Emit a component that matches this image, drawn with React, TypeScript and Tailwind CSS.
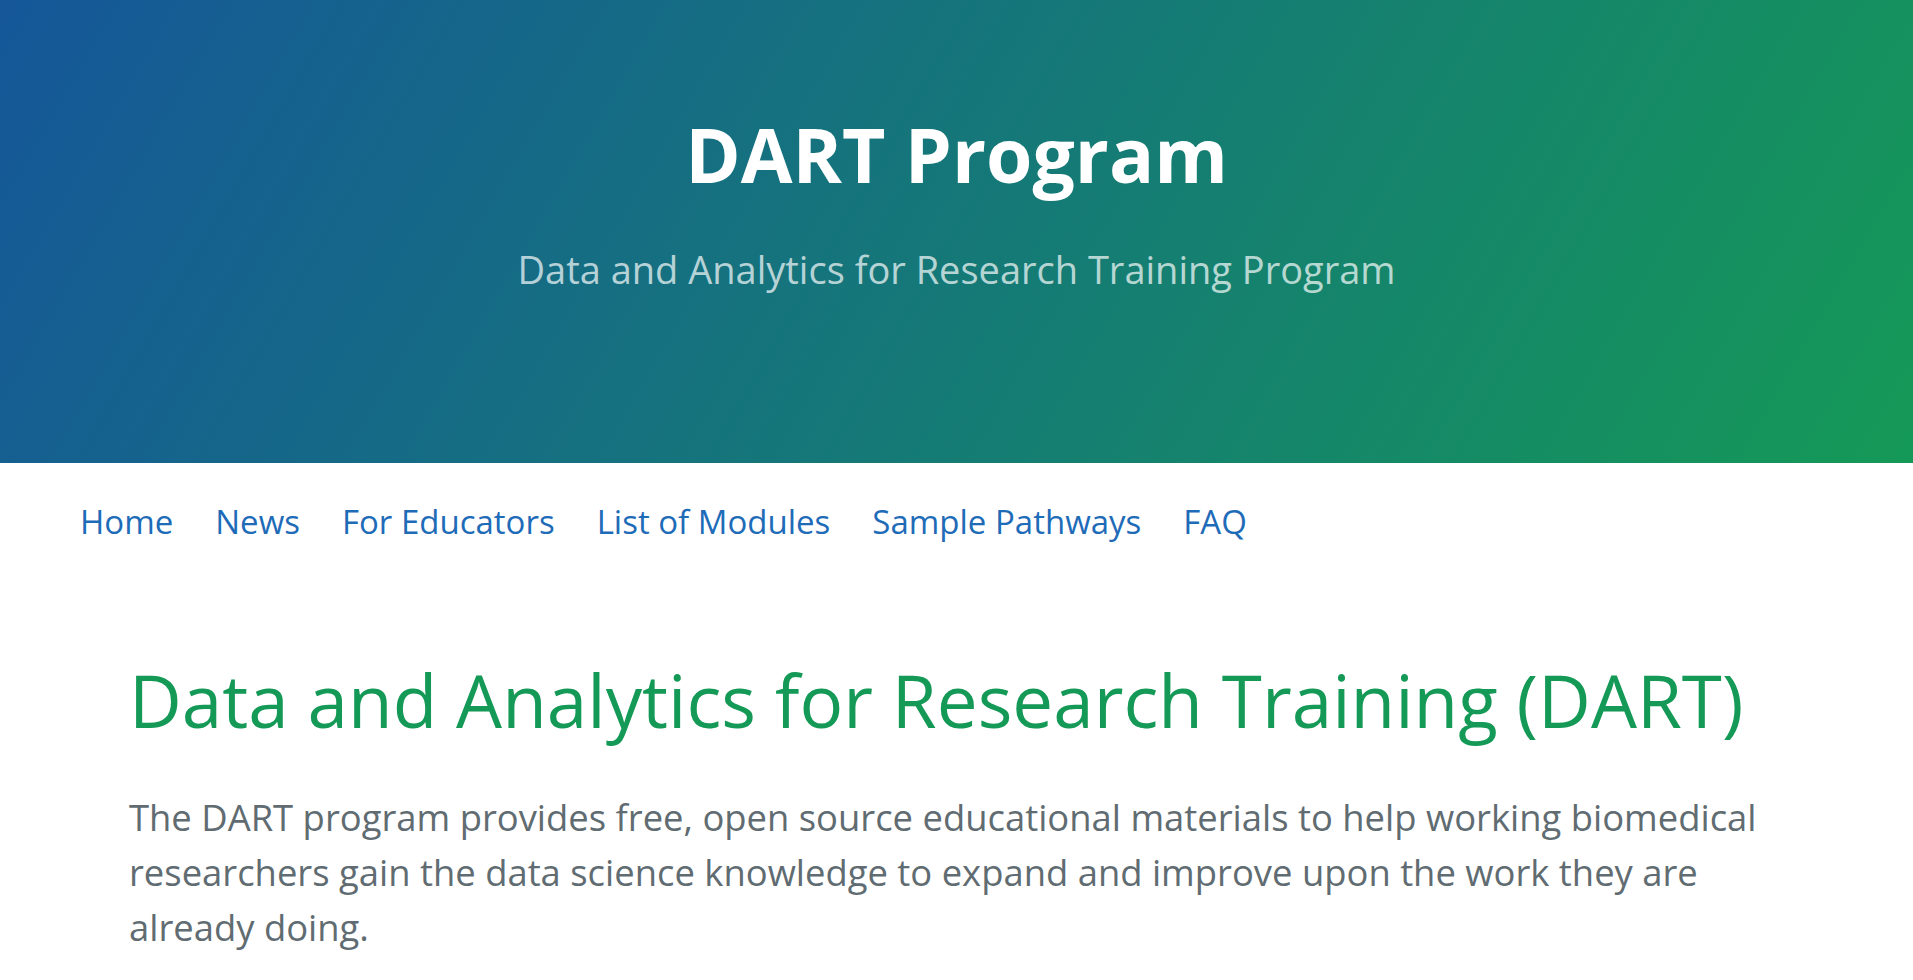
const links = ["Home", "News", "For Educators", "List of Modules", "Sample Pathways", "FAQ"];

export default function App(): React.ReactNode {
  return (
    <div className="min-h-screen bg-white font-['Open_Sans',sans-serif]">
      <header className="flex h-[463px] flex-col items-center bg-[linear-gradient(120deg,#155799,#159957)] pt-[113px] text-center">
        <h1 className="text-[75px] leading-[1.1] font-bold text-white">DART Program</h1>
        <h2 className="mt-[45px] text-[38px] leading-[1.5] font-normal text-white/70">
          Data and Analytics for Research Training Program
        </h2>
      </header>

      <nav className="flex gap-[42px] px-[80px] pt-[34px]">
        {links.map((link) => (
          <a key={link} href="#" className="text-[33px] leading-[1.5] text-[#1e6bb8]">
            {link}
          </a>
        ))}
      </nav>

      <main className="px-[129px] pt-[107px]">
        <h1 className="text-[72.8px] leading-[1.25] font-normal text-[#159957]">
          Data and Analytics for Research Training (DART)
        </h1>
        <p className="mt-[46px] text-[36.4px] leading-[55px] text-[#606c71]">
          The DART program provides free, open source educational materials to help working biomedical
          researchers gain the data science knowledge to expand and improve upon the work they are
          already doing.
        </p>
      </main>
    </div>
  );
}
